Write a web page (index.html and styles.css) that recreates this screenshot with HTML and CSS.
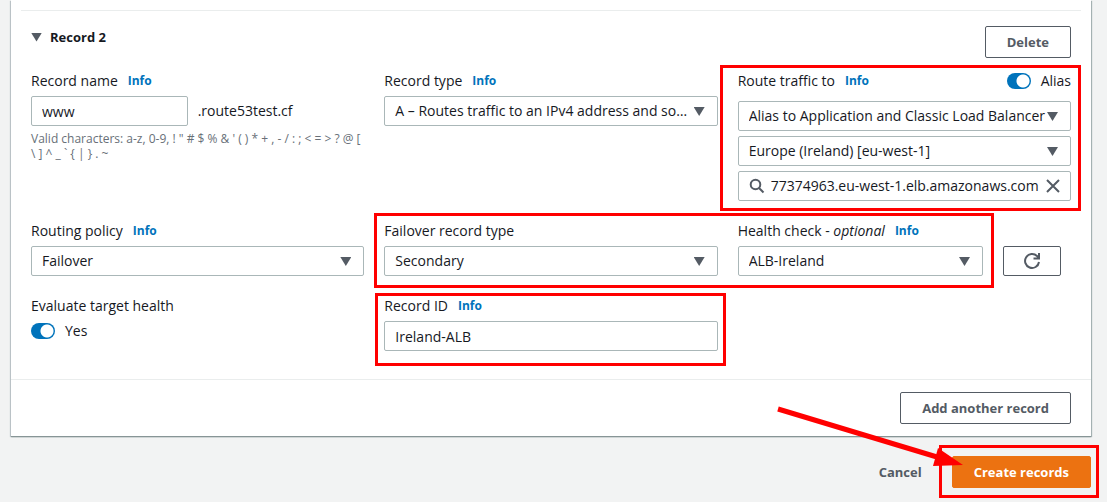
FILE: index.html
```html
<!DOCTYPE html>
<html lang="en">
<head>
<meta charset="utf-8">
<meta name="viewport" content="width=device-width, initial-scale=1">
<title>Create records</title>
<link rel="stylesheet" href="styles.css">
</head>
<body>
<form class="page">
  <section class="card">
    <div class="record">
      <header class="record-header">
        <h2 class="record-title"><span class="caret" aria-hidden="true"></span>Record 2</h2>
        <button type="button" class="button">Delete</button>
      </header>

      <div class="fields">
        <div class="field">
          <div class="label-row"><label for="name">Record name</label><a class="info" href="#">Info</a></div>
          <div class="name-row">
            <input class="control name-input" id="name" type="text" value="www">
            <span>.route53test.cf</span>
          </div>
          <p class="hint">Valid characters: a-z, 0-9, ! " # $ % &amp; ' ( ) * + , - / : ; &lt; = &gt; ? @ [<br>\ ] ^ _ ` { | } . ~</p>
        </div>

        <div class="field">
          <div class="label-row"><label for="type">Record type</label><a class="info" href="#">Info</a></div>
          <div class="select"><select class="control" id="type"><option>A – Routes traffic to an IPv4 address and some AWS resources</option></select></div>
        </div>

        <div class="field marked mark-route">
          <div class="label-row">
            <label for="target">Route traffic to</label><a class="info" href="#">Info</a>
            <label class="toggle push"><input type="checkbox" class="switch" checked>Alias</label>
          </div>
          <div class="stack">
            <div class="select"><select class="control" id="target"><option>Alias to Application and Classic Load Balancer</option></select></div>
            <div class="select"><select class="control" aria-label="Region"><option>Europe (Ireland) [eu-west-1]</option></select></div>
            <div class="control search">
              <svg class="icon" viewBox="0 0 16 16" aria-hidden="true"><circle cx="6.500" cy="6.500" r="4.800"/><path d="M10 10l4.500 4.500"/></svg>
              <input class="search-input" type="text" aria-label="Load balancer" value="77374963.eu-west-1.elb.amazonaws.com">
              <button type="button" class="clear" aria-label="Clear"><svg class="icon" viewBox="0 0 16 16" aria-hidden="true"><path d="m2 2 12 12M14 2 2 14"/></svg></button>
            </div>
          </div>
        </div>

        <div class="field">
          <div class="label-row"><label for="policy">Routing policy</label><a class="info" href="#">Info</a></div>
          <div class="select"><select class="control" id="policy"><option>Failover</option></select></div>
        </div>

        <div class="pair marked mark-failover">
          <div class="field">
            <div class="label-row"><label for="failover">Failover record type</label></div>
            <div class="select"><select class="control" id="failover"><option>Secondary</option></select></div>
          </div>
          <div class="field">
            <div class="label-row"><label for="health">Health check - <em>optional</em></label><a class="info" href="#">Info</a></div>
            <div class="health-row">
              <div class="select"><select class="control" id="health"><option>ALB-Ireland</option></select></div>
              <button type="button" class="button refresh" aria-label="Refresh"><svg class="icon refresh-icon" viewBox="0 0 18 18" aria-hidden="true"><path d="M16 10a7 7 0 1 1-2-6l1.500 2M16 1v5.500h-5.500"/></svg></button>
            </div>
          </div>
        </div>

        <div class="field">
          <div class="label-row"><label for="evaluate">Evaluate target health</label></div>
          <label class="toggle"><input type="checkbox" class="switch" id="evaluate" checked>Yes</label>
        </div>

        <div class="field marked mark-id">
          <div class="label-row"><label for="record-id">Record ID</label><a class="info" href="#">Info</a></div>
          <input class="control" id="record-id" type="text" value="Ireland-ALB">
        </div>
      </div>
    </div>
    <footer class="card-footer"><button type="button" class="button">Add another record</button></footer>
  </section>

  <div class="actions">
    <button type="button" class="button link-button">Cancel</button>
    <div class="marked mark-create">
      <button type="submit" class="button primary">Create records</button>
      <svg class="arrow" viewBox="0 0 186 62" aria-hidden="true"><path class="arrow-line" d="M1 3 160 51"/><path class="arrow-head" d="M161 42 186 59 156 60z"/></svg>
    </div>
  </div>
</form>
</body>
</html>
```
FILE: styles.css
```css
* { box-sizing: border-box; }

body {
  margin: 0;
  background: #f2f3f3;
  color: #16191f;
  font: 14px/20px "Open Sans", "Noto Sans", sans-serif;
  overflow-x: hidden;
}

input, select, button { font: inherit; color: inherit; }

.page { padding: 0 16px 14px 11px; }

.card {
  background: #fff;
  box-shadow: 0 1px 1px #879596, 1px 1px 1px #aab7b8, -1px 1px 1px #c5ccd0;
  padding-top: 10px;
}

.record { padding: 0 20px 28px; }

.record::before {
  content: "";
  display: block;
  height: 1px;
  margin: 0 -10px;
  background: #eaeded;
}

.record-header {
  display: flex;
  justify-content: space-between;
  align-items: flex-start;
  padding: 15px 0 13px;
}

.record-title {
  display: flex;
  align-items: center;
  gap: 8px;
  margin: 0;
  font-size: 13px;
  line-height: 22px;
}

.caret, .select::after {
  width: 11px;
  height: 9px;
  background: #545b64;
  clip-path: polygon(0 0, 100% 0, 50% 100%);
}

.fields {
  display: grid;
  grid-template-columns: repeat(3, minmax(0, 1fr));
  column-gap: 20px;
  row-gap: 20px;
}

.field { min-width: 0; }

.label-row {
  display: flex;
  align-items: center;
  gap: 10px;
  height: 20px;
  margin-bottom: 5px;
  white-space: nowrap;
}

.mark-route .label-row { margin-bottom: 10px; }

.info {
  color: #0073bb;
  font-size: 12px;
  font-weight: 700;
  text-decoration: none;
}

.control {
  display: block;
  width: 100%;
  height: 30px;
  padding: 0 10px;
  border: 1px solid #aab7b8;
  border-radius: 2px;
  background: #fff;
}

.select { position: relative; }

.select .control {
  appearance: none;
  padding-right: 24px;
  text-overflow: ellipsis;
}

.select::after {
  content: "";
  position: absolute;
  top: 11px;
  right: 13px;
  pointer-events: none;
}

.name-row { display: flex; align-items: center; gap: 10px; }
.name-input { width: 47%; }

.hint {
  margin: 5px 0 0;
  color: #687078;
  font-size: 12px;
  line-height: 15px;
  white-space: nowrap;
}

.stack { display: grid; gap: 5px; }

.search { display: flex; align-items: center; gap: 6px; padding-right: 9px; }

.search-input {
  flex: 1;
  min-width: 0;
  padding: 0;
  border: 0;
  outline: 0;
  background: none;
}

.icon {
  display: block;
  flex: none;
  width: 16px;
  height: 16px;
  fill: none;
  stroke: #545b64;
  stroke-width: 2;
}

.clear { padding: 0; border: 0; background: none; }

.toggle { display: flex; align-items: center; gap: 10px; }
.push { margin-left: auto; }

.switch {
  appearance: none;
  width: 24px;
  height: 16px;
  margin: 0;
  border-radius: 8px;
  background: radial-gradient(circle at 16px 8px, #fff 6px, #0073bb 7px);
}

.pair {
  grid-column: span 2;
  display: grid;
  grid-template-columns: repeat(2, minmax(0, 1fr));
  gap: 20px;
}

.health-row {
  display: grid;
  grid-template-columns: 1fr 58px;
  gap: 20px;
  padding-right: 10px;
}

.button {
  height: 32px;
  padding: 0 21px;
  border: 1px solid #545b64;
  border-radius: 2px;
  background: #fff;
  color: #545b64;
  font-size: 13px;
  font-weight: 700;
  white-space: nowrap;
}

.refresh {
  display: grid;
  place-items: center;
  height: 30px;
  padding: 0;
}

.refresh-icon { width: 18px; height: 18px; }

.card-footer {
  display: flex;
  justify-content: flex-end;
  padding: 12px 20px;
  border-top: 1px solid #eaeded;
}

.actions {
  display: flex;
  justify-content: flex-end;
  gap: 8px;
  padding-top: 20px;
}

.link-button { border-color: transparent; background: transparent; }
.primary { border-color: #ec7211; background: #ec7211; color: #fff; }

.marked { position: relative; }

.marked::after {
  content: "";
  position: absolute;
  border: 3px solid #f00;
  pointer-events: none;
}

.mark-route::after { inset: -6px -10px -10px -18px; }
.mark-failover::after { inset: -8px 77px -12px -10px; }
.mark-id::after { inset: -3px -8px -15px -9px; }
.mark-create::after { inset: -11px -8px -10px -13px; }

.arrow {
  position: absolute;
  right: 128px;
  bottom: 20px;
  width: 186px;
  height: 62px;
  pointer-events: none;
}

.arrow-line { stroke: #f00; stroke-width: 5; }
.arrow-head { fill: #f00; }
```
